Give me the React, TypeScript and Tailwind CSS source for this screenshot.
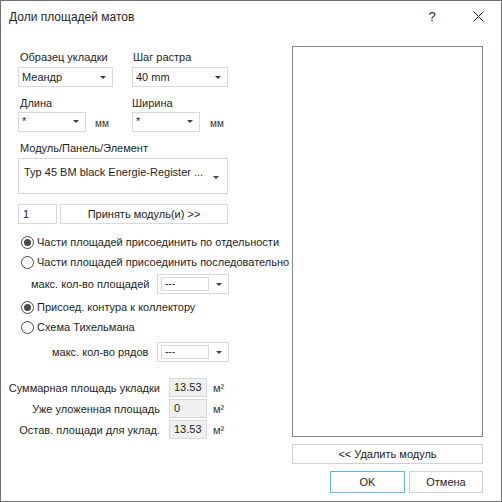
import React from 'react';

function Arrow() {
  return (
    <svg width="6" height="3" viewBox="0 0 6 3" className="shrink-0">
      <path d="M0 0h6L3 3z" fill="#3c3c3c" />
    </svg>
  );
}

function Combo({ value, width }: { value: string; width: string }) {
  return (
    <div className={`flex h-[20px] ${width} items-center border border-[#d9d9d9] bg-white pl-[3px] pr-[6px]`}>
      <span className="flex-1 leading-none">{value}</span>
      <Arrow />
    </div>
  );
}

function EditCombo() {
  return (
    <div className="flex h-[20px] w-[72px] items-center border border-[#d9d9d9] bg-white pl-[3px] pr-[6px]">
      <div className="flex h-[14px] w-[48px] items-center border border-[#d9d9d9] pl-[3px] text-[10px] leading-none">---</div>
      <div className="flex flex-1 justify-end"><Arrow /></div>
    </div>
  );
}

function Radio({ checked, label }: { checked?: boolean; label: string }) {
  return (
    <div className="flex h-[20px] items-center pl-[3px]">
      <div className="flex h-[13px] w-[13px] shrink-0 items-center justify-center rounded-full border border-[#4a4a4a] bg-white">
        {checked && <div className="h-[7px] w-[7px] rounded-full bg-[#4a4a4a]" />}
      </div>
      <span className="ml-[3px] whitespace-nowrap">{label}</span>
    </div>
  );
}

function SumRow({ label, value }: { label: string; value: string }) {
  return (
    <div className="flex h-[19px] items-center">
      <div className="w-[159px] whitespace-nowrap text-right">{label}</div>
      <div className="ml-[9px] flex h-[19px] w-[38px] items-center border border-[#d9d9d9] bg-[#f0f0f0] pl-[4px] leading-none">{value}</div>
      <span className="ml-[6px] text-[#333]">м²</span>
    </div>
  );
}

export default function App() {
  return (
    <div className="flex h-[502px] w-[502px] flex-col border border-[#707070] bg-white font-['Liberation_Sans',Arial,sans-serif] text-[11px] leading-[16px] text-[#1e1e1e]">
      <div className="flex h-[31px] shrink-0 items-center">
        <div className="flex-1 pl-[8px] text-[12px]">Доли площадей матов</div>
        <div className="flex h-full w-[46px] items-center justify-center text-[13px]">?</div>
        <div className="flex h-full w-[46px] items-center justify-center">
          <svg width="11" height="11" viewBox="0 0 11 11">
            <path d="M0.5 0.5l10 10M10.5 0.5l-10 10" stroke="#222" strokeWidth="1" />
          </svg>
        </div>
      </div>

      <div className="flex flex-1">
        <div className="w-[288px] overflow-hidden">
          <div className="pl-[17px]">
            <div className="mt-[17px] flex">
              <div className="w-[114px] pl-[2px]">
                <div>Образец укладки</div>
                <div className="mt-[2px] -ml-[2px]"><Combo value="Меандр" width="w-[95px]" /></div>
              </div>
              <div className="pl-[1px]">
                <div>Шаг растра</div>
                <div className="mt-[2px] -ml-[1px]"><Combo value="40 mm" width="w-[96px]" /></div>
              </div>
            </div>

            <div className="mt-[8px] flex">
              <div className="w-[114px]">
                <div className="pl-[2px]">Длина</div>
                <div className="flex items-center">
                  <Combo value="*" width="w-[68px]" />
                  <span className="ml-[9px] mt-[5px] text-[10px] text-[#333]">мм</span>
                </div>
              </div>
              <div>
                <div>Ширина</div>
                <div className="flex items-center">
                  <Combo value="*" width="w-[68px]" />
                  <span className="ml-[10px] mt-[5px] text-[10px] text-[#333]">мм</span>
                </div>
              </div>
            </div>

            <div className="mt-[8px] pl-[2px]">Модуль/Панель/Элемент</div>
            <div className="mt-[2px] flex h-[36px] w-[210px] border border-[#d9d9d9] bg-white pl-[5px] pr-[8px]">
              <span className="mt-[5px] flex-1 whitespace-nowrap">Typ 45 BM black Energie-Register ...</span>
              <div className="mt-[17px]"><Arrow /></div>
            </div>

            <div className="mt-[10px] flex h-[20px]">
              <div className="flex w-[39px] items-center border border-[#d9d9d9] pl-[4px]">1</div>
              <div className="ml-[3px] flex w-[168px] items-center justify-center border border-[#d9d9d9] text-[#222]">Принять модуль(и) &gt;&gt;</div>
            </div>

            <div className="mt-[8px]">
              <Radio checked label="Части площадей присоединить по отдельности" />
              <Radio label="Части площадей присоединить последовательно" />
            </div>

            <div className="mt-[2px] flex items-center">
              <span className="ml-[13px] w-[126px] whitespace-nowrap">макс. кол-во площадей</span>
              <EditCombo />
            </div>

            <div className="mt-[3px]">
              <Radio checked label="Присоед. контура к коллектору" />
              <Radio label="Схема Тихельмана" />
            </div>

            <div className="mt-[5px] flex items-center">
              <span className="ml-[34px] w-[105px] whitespace-nowrap">макс. кол-во рядов</span>
              <EditCombo />
            </div>
          </div>

          <div className="mt-[16px] flex flex-col gap-[2px]">
            <SumRow label="Суммарная площадь укладки" value="13.53" />
            <SumRow label="Уже уложенная площадь" value="0" />
            <SumRow label="Остав. площади для уклад." value="13.53" />
          </div>
        </div>

        <div className="ml-[3px] w-[191px]">
          <div className="mt-[14px] h-[391px] border border-[#828790] bg-white" />
          <div className="mt-[7px] flex h-[20px] items-center justify-center border border-[#d0d0d0] text-[#222]">&lt;&lt; Удалить модуль</div>
          <div className="mt-[7px] flex h-[22px] justify-end gap-[4px]">
            <div className="flex w-[75px] items-center justify-center border border-[#6cb2e3]">OK</div>
            <div className="flex w-[74px] items-center justify-center border border-[#d0d0d0]">Отмена</div>
          </div>
        </div>
      </div>
    </div>
  );
}
